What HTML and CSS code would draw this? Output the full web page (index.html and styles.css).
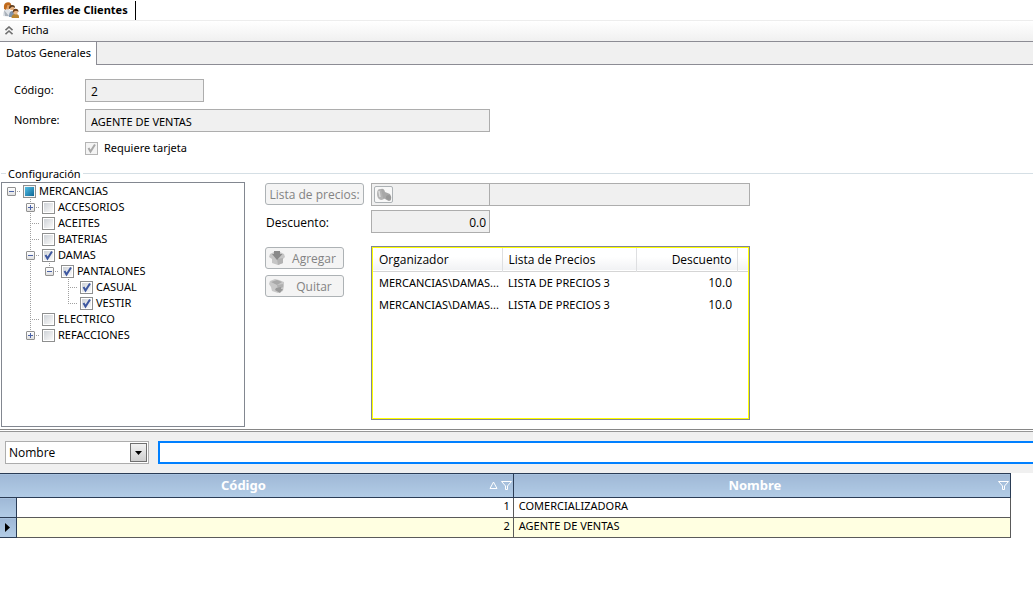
FILE: index.html
```html
<!DOCTYPE html>
<html lang="es">
<head>
<meta charset="utf-8">
<title>Perfiles de Clientes</title>
<link rel="stylesheet" href="styles.css">
</head>
<body>
<header class="titlebar">
  <svg class="app-icon" width="16" height="16" viewBox="0 0 16 16" aria-hidden="true">
    <path d="M0 14q0-7 4-7t4 5v3z" fill="#dfe3e8"/>
    <path d="M1 8l5 6-4 0z" fill="#a9b1ba"/>
    <ellipse cx="5" cy="4.500" rx="2.500" ry="3" fill="#e0a065"/>
    <path d="M1 7Q0 .5 5 .3 9 .5 8 4.500 6 2.500 4.500 3L3 8z" fill="#c06a1c"/>
    <path d="M6 15q0-6 3-6t3 6z" fill="#7f95ad"/>
    <circle cx="9" cy="6" r="2.300" fill="#e6b07c"/>
    <path d="M6 7q-.3-4 3-4t3 3Q9 4 8 5.500z" fill="#5d3d20"/>
    <path d="M8.500 16q0-4 4-4t3.500 4z" fill="#b98430"/>
    <circle cx="12.500" cy="10" r="2.400" fill="#eab785"/>
    <path d="M9.700 11q-.2-4.300 2.800-4.300T15.500 10Q13 8 11.500 9.200z" fill="#6d3f1a"/>
  </svg>
  <h1 class="title">Perfiles de Clientes</h1>
</header>
<div class="toolbar">
  <button class="collapse" type="button">
    <svg width="8" height="9" viewBox="0 0 8 9" aria-hidden="true"><path d="M.5 4.200L4 1l3.500 3.200M.5 8.200L4 5l3.500 3.200" fill="none" stroke="#707070" stroke-width="1.600"/></svg>
    Ficha
  </button>
</div>
<nav class="tabs"><button class="tab" type="button">Datos Generales</button></nav>
<main class="form">
  <div class="fields">
    <label for="codigo">Código:</label>
    <input class="box short" id="codigo" type="text" value="2" readonly>
    <label for="nombre">Nombre:</label>
    <input class="box caps" id="nombre" type="text" value="AGENTE DE VENTAS" readonly>
    <label class="card-check"><input class="check dim" type="checkbox" checked disabled>Requiere tarjeta</label>
  </div>
  <fieldset class="config">
    <legend>Configuración</legend>
    <div class="config-body">
      <ul class="tree">
        <li class="root">
          <div class="row"><button class="toggle" type="button" aria-label="Contraer"></button><label><input class="check mixed" type="checkbox">MERCANCIAS</label></div>
          <ul>
            <li><div class="row"><button class="toggle plus" type="button" aria-label="Expandir"></button><label><input class="check" type="checkbox">ACCESORIOS</label></div></li>
            <li><div class="row leaf"><label><input class="check" type="checkbox">ACEITES</label></div></li>
            <li><div class="row leaf"><label><input class="check" type="checkbox">BATERIAS</label></div></li>
            <li><div class="row"><button class="toggle" type="button" aria-label="Contraer"></button><label><input class="check" type="checkbox" checked>DAMAS</label></div>
              <ul>
                <li><div class="row"><button class="toggle" type="button" aria-label="Contraer"></button><label><input class="check" type="checkbox" checked>PANTALONES</label></div>
                  <ul>
                    <li><div class="row leaf"><label><input class="check" type="checkbox" checked>CASUAL</label></div></li>
                    <li><div class="row leaf"><label><input class="check" type="checkbox" checked>VESTIR</label></div></li>
                  </ul>
                </li>
              </ul>
            </li>
            <li><div class="row leaf"><label><input class="check" type="checkbox">ELECTRICO</label></div></li>
            <li><div class="row"><button class="toggle plus" type="button" aria-label="Expandir"></button><label><input class="check" type="checkbox">REFACCIONES</label></div></li>
          </ul>
        </li>
      </ul>
      <div class="prices">
        <button class="btn" type="button" disabled>Lista de precios:</button>
        <div class="lookup">
          <div class="lookup-code">
            <button class="find" type="button" disabled aria-label="Buscar">
              <svg width="16" height="14" viewBox="0 0 16 14" aria-hidden="true"><path d="M1 6q0-5 3-5 3-.5 4 3l1 5q-1 3-4 3-4-1-4-6z" fill="#b4b4b4"/><path d="M5 1q3-1 4 3l5 2q2 3 1 6-2 2-4 0L7 10z" fill="#a8a8a8"/><ellipse cx="12.500" cy="9.500" rx="2.500" ry="2.500" fill="#989898"/><path d="M3 3l1 6" stroke="#ddd" stroke-width="1.500"/></svg>
            </button>
            <input type="text" aria-label="Clave de lista" disabled>
          </div>
          <input class="lookup-name" type="text" aria-label="Nombre de lista" disabled>
        </div>
        <label for="descuento">Descuento:</label>
        <input class="box short num" id="descuento" type="text" value="0.0" readonly>
        <div class="actions">
          <button class="btn" type="button" disabled>
            <svg width="16" height="16" viewBox="0 0 16 16" aria-hidden="true"><path d="M1 4l4-2 3 3 3-3 4 2 1 3-2 2v4l-5 2-6-2V9L0 7z" fill="#c6c6c6"/><path d="M8 9l6-1v5l-5 2z" fill="#b2b2b2"/><path d="M5 1h6v3h2.500L8 10 3 4h2z" fill="#8a8a8a"/></svg>
            <span>Agregar</span>
          </button>
          <button class="btn" type="button" disabled>
            <svg width="16" height="16" viewBox="0 0 16 16" aria-hidden="true"><path d="M1 3l5-2 4 1 5 2 0 4-1 5-5 2-6-2-1-4L0 6z" fill="#c8c8c8"/><path d="M2 4l6-2 5 2-5 3z" fill="#a8a8a8"/><path d="M8 7l6-1v3l-5 3z" fill="#b0b0b0"/><path d="M7 10l5-1v2h2l-3 4-5-3z" fill="#999"/></svg>
            <span>Quitar</span>
          </button>
        </div>
        <div class="list">
          <table>
            <colgroup><col class="c-org"><col class="c-list"><col class="c-desc"><col></colgroup>
            <thead><tr><th>Organizador</th><th>Lista de Precios</th><th class="num">Descuento</th><td></td></tr></thead>
            <tbody>
              <tr><td class="caps">MERCANCIAS\DAMAS...</td><td class="caps">LISTA DE PRECIOS 3</td><td class="num">10.0</td><td></td></tr>
              <tr><td class="caps">MERCANCIAS\DAMAS...</td><td class="caps">LISTA DE PRECIOS 3</td><td class="num">10.0</td><td></td></tr>
            </tbody>
          </table>
        </div>
      </div>
    </div>
  </fieldset>
</main>
<section class="search">
  <div class="combo">
    <select aria-label="Buscar por"><option>Nombre</option></select>
    <span class="arrow"><svg width="7" height="4" viewBox="0 0 7 4" aria-hidden="true"><path d="M0 0h7L3.500 4z"/></svg></span>
  </div>
  <input class="query" type="text" aria-label="Texto a buscar">
</section>
<table class="grid">
  <colgroup><col class="c-mark"><col><col></colgroup>
  <thead>
    <tr>
      <th colspan="2"><div class="head"><span>Código</span>
        <svg width="9" height="8" viewBox="0 0 9 8" aria-hidden="true"><path d="M1 7.500L4.500 1 8 7.500z" fill="none" stroke="#fff"/></svg>
        <svg width="11" height="9" viewBox="0 0 11 9" aria-hidden="true"><path d="M.5.5h10L6.500 5v3.500h-2V5z" fill="none" stroke="#fff"/></svg></div></th>
      <th><div class="head"><span>Nombre</span>
        <svg width="11" height="9" viewBox="0 0 11 9" aria-hidden="true"><path d="M.5.5h10L6.500 5v3.500h-2V5z" fill="none" stroke="#fff"/></svg></div></th>
    </tr>
  </thead>
  <tbody>
    <tr><td class="mark"></td><td class="num">1</td><td>COMERCIALIZADORA</td></tr>
    <tr class="current"><td class="mark"><svg width="5" height="9" viewBox="0 0 5 9" aria-hidden="true"><path d="M0 0l5 4.500L0 9z"/></svg></td><td class="num">2</td><td>AGENTE DE VENTAS</td></tr>
  </tbody>
</table>
</body>
</html>
```
FILE: styles.css
```css
* { box-sizing: border-box; }
body, h1, ul, fieldset { margin: 0; padding: 0; }
body {
  background: #fff;
  color: #000;
  font: 11px/16px "Noto Sans", sans-serif;
}
button, input, select { font: inherit; color: inherit; margin: 0; padding: 0; border: 0; background: none; border-radius: 0; outline: 0; }
svg { display: block; flex: none; }
ul { list-style: none; }
.num { text-align: right; }

.titlebar { display: flex; align-items: center; height: 20px; padding-left: 3px; gap: 4px; }
.title { font: bold 11px/18px "Noto Sans", sans-serif; padding: 0 7px 1px 0; border-right: 1px solid #000; }
.toolbar { height: 21px; padding-left: 5px; background: linear-gradient(#fff, #f0f0f0); border-top: 1px solid #ededed; }
.collapse { display: flex; align-items: center; gap: 9px; height: 18px; }
.tabs { display: flex; height: 24px; background: #f0f0f0; border-top: 1px solid #8c8c94; border-bottom: 1px solid #8c8c94; }
.tab { height: 23px; padding: 0 5px 2px 6px; background: #fff; border-right: 1px solid #8c8c94; }

.fields { display: grid; grid-template-columns: 71px 405px; row-gap: 7px; align-items: center; padding: 14px 0 0 14px; }
.fields > label { padding-bottom: 2px; }
.box { height: 23px; padding: 2px 5px 0; background: #f0f0f0; border: 1px solid #adadad; font: 12px "Open Sans", sans-serif; }
.box.short { width: 119px; }
.box.num { padding-right: 3px; }
.box.caps { font: 11px "Noto Sans", sans-serif; }
.fields .card-check { grid-column: 2; display: flex; align-items: center; gap: 6px; padding: 0; line-height: 18px; }
.check {
  appearance: none; flex: none; width: 13px; height: 13px; border: 1px solid #8e8f8f;
  background: linear-gradient(135deg, #cfd3d8, #fafafa) content-box #f4f4f4; padding: 1px;
}
.check:checked {
  background: url("data:image/svg+xml,%3Csvg xmlns='http://www.w3.org/2000/svg' width='11' height='11'%3E%3Cpath d='M2.500 5l2 3.500L9 1.500' fill='none' stroke='%233d57a0' stroke-width='2'/%3E%3C/svg%3E") border-box center no-repeat, linear-gradient(135deg, #cfd3d8, #fafafa) content-box #f4f4f4;
}
.check.dim { border-color: #b4b4b4; background: url("data:image/svg+xml,%3Csvg xmlns='http://www.w3.org/2000/svg' width='11' height='11'%3E%3Cpath d='M2.500 5l2 3.500L9 1.500' fill='none' stroke='%23a8a8a8' stroke-width='2'/%3E%3C/svg%3E") border-box center no-repeat #f4f4f4; }
.check.mixed { background: linear-gradient(135deg, #54bfe6, #0d6796) center / 9px 9px no-repeat #f4f4f4; }

.config { border: 0; border-top: 1px solid #d5dfe5; margin: 8px 0 0 1px; }
.config legend { margin-left: 5px; padding: 0 2px; line-height: 17px; }
.config-body { display: flex; gap: 20px; }
.tree { width: 244px; height: 245px; border: 1px solid #828790; padding-left: 1px; }
.tree ul { margin-left: 19px; }
.tree li { background: repeating-linear-gradient(#a0a0a0 0 1px, #fff 1px 2px) 8px 0 / 1px 100% no-repeat; }
.tree li:last-child { background-size: 1px 8px; }
.tree .root { background: none; }
.row { display: flex; align-items: center; height: 16px; padding-left: 4px; background: repeating-linear-gradient(90deg, #a0a0a0 0 1px, #fff 1px 2px) 8px 8px / 10px 1px no-repeat; }
.row.leaf { padding-left: 20px; }
.row label { display: flex; align-items: center; gap: 3px; }
.toggle {
  width: 9px; height: 9px; margin-right: 7px; border: 1px solid #919191; border-radius: 1px;
  background: linear-gradient(#4b63a7, #4b63a7) center / 5px 1px no-repeat, linear-gradient(#fff, #e0e0e0);
}
.toggle.plus { background: linear-gradient(#4b63a7, #4b63a7) center / 5px 1px no-repeat, linear-gradient(#4b63a7, #4b63a7) center / 1px 5px no-repeat, linear-gradient(#fff, #e0e0e0); }

.prices { display: grid; grid-template-columns: 99px 379px; grid-template-rows: 23px 23px 183px; gap: 4px 7px; align-content: start; padding-top: 1px; }
.prices > label { align-self: center; padding: 2px 0 0 1px; font: 12px/16px "Open Sans", sans-serif; }
.btn { display: flex; align-items: center; justify-content: center; height: 22px; border: 1px solid #adb2b5; border-radius: 3px; background: #f4f4f4; color: #838383; font: 12px "Open Sans", sans-serif; }
.lookup { display: flex; height: 23px; background: #f0f0f0; border: 1px solid #adadad; }
.lookup-code { display: flex; align-items: center; width: 118px; padding-left: 2px; border-right: 1px solid #adadad; }
.lookup-code input, .lookup-name { flex: 1; min-width: 0; }
.find { display: grid; place-items: center; width: 19px; height: 17px; border: 1px solid #adb2b5; border-radius: 2px; background: #f8f8f8; }
.actions { display: flex; flex-direction: column; gap: 6px; width: 79px; padding-top: 10px; }
.actions .btn { justify-content: start; padding-left: 3px; }
.actions span { flex: 1; text-align: center; }
.list { height: 174px; margin-top: 9px; border: 1px solid #828790; box-shadow: inset 0 0 0 1px #ff0; padding: 1px; }
.list table { width: 100%; table-layout: fixed; border-collapse: collapse; font: 12px/18px "Open Sans", sans-serif; }
.list .caps { font: 11px/18px "Noto Sans", sans-serif; }
.c-org { width: 129px; }
.c-list { width: 134px; }
.c-desc { width: 101px; }
.list thead tr { height: 23px; background: linear-gradient(#fff 40%, #f1f2f4); border-bottom: 1px solid #d5d5d5; }
.list th { font-weight: 400; border-right: 1px solid #dedfe1; text-align: left; }
.list th.num { text-align: right; }
.list th, .list td { padding: 2px 0 0 6px; white-space: nowrap; }
.list .num { padding-right: 5px; }
.list tbody tr { height: 22px; }

.search { display: flex; gap: 9px; height: 44px; margin-top: 2px; padding: 12px 0 0 5px; background: linear-gradient(#868686 0 1px, #fff 1px 2px, #969696 2px 3px, #f0f0f0 3px); }
.combo { display: flex; width: 144px; height: 23px; padding: 1px; border: 1px solid #adadad; background: #fff; }
.combo select { appearance: none; flex: 1; min-width: 0; padding-left: 2px; font: 12px "Open Sans", sans-serif; }
.arrow { display: grid; place-items: center; width: 17px; border: 1px solid #707070; background: linear-gradient(#f2f2f2, #cfcfcf); }
.query { flex: 1; min-width: 0; height: 23px; padding: 0 4px; border: 2px solid #0080ff; border-right: 0; background: #fff; }

.grid { width: calc(100% - 22px); table-layout: fixed; border-collapse: collapse; }
.grid th, .grid td { padding: 0 3px 3px 5px; border: 1px solid #5a5a5a; height: 20px; }
.grid th { height: 24px; padding: 0 1px 1px; background: linear-gradient(#9fb8d6, #b2cce6); border-color: #2a3c55; color: #fff; font: bold 13px "Noto Sans", sans-serif; }
.grid th:first-child, .grid td:first-child { border-left: 0; }
.c-mark { width: 16px; }
.head { display: flex; align-items: center; gap: 3px; }
.head span { flex: 1; }
.grid .mark { padding: 0 0 0 5px; background: linear-gradient(#9fb8d6, #b2cce6); border-color: #2a3c55; }
.current { background: #ffffe1; }
```
